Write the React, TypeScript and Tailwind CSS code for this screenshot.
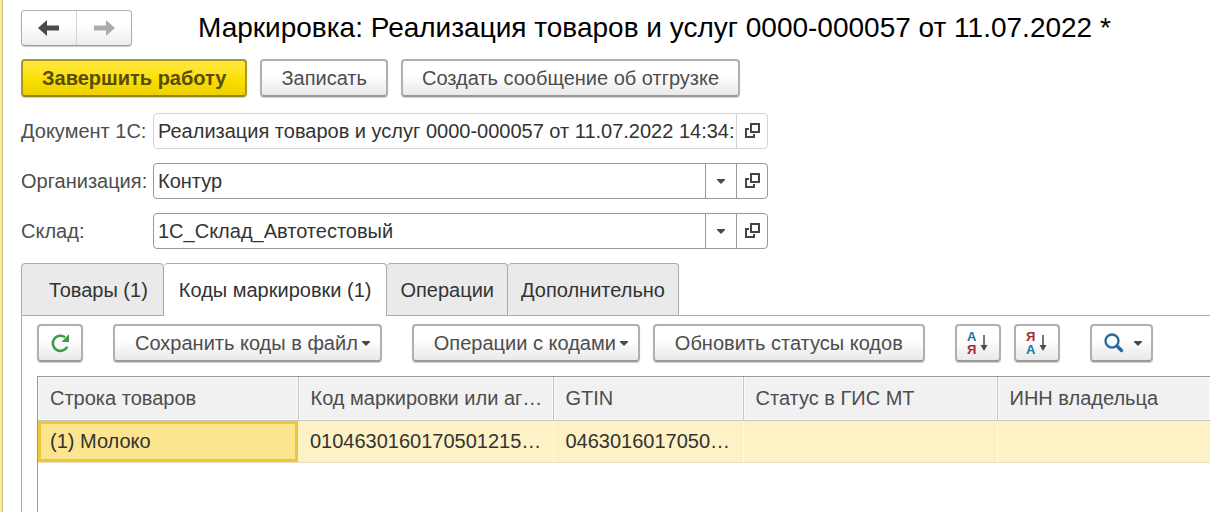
import React, { useState } from 'react';
import clsx from 'clsx';

interface MarkingRow {
  id: number;
  product: string;
  code: string;
  gtin: string;
  status: string;
  inn: string;
}

const tabs = [
  { title: 'Товары (1)', padding: 'border-l pl-[27px] pr-[15px]' },
  { title: 'Коды маркировки (1)', padding: 'px-[15px]' },
  { title: 'Операции', padding: 'px-[13px]' },
  { title: 'Дополнительно', padding: 'px-[13px]' },
];

const columns = [
  { title: 'Строка товаров', width: 'w-[260px]' },
  { title: 'Код маркировки или аг…', width: 'w-[255px]' },
  { title: 'GTIN', width: 'w-[190px]' },
  { title: 'Статус в ГИС МТ', width: 'w-[254px]' },
  { title: 'ИНН владельца', width: '' },
];

const rows: MarkingRow[] = [
  {
    id: 1,
    product: '(1) Молоко',
    code: '0104630160170501215…',
    gtin: '0463016017050…',
    status: '',
    inn: '',
  },
];

const buttonBase =
  'flex h-[38px] shrink-0 items-center justify-center rounded border-2 whitespace-nowrap shadow-[0_1px_1px_rgba(0,0,0,0.2)]';
const grayButton =
  'border-[#b0b0b0] border-b-[#9a9a9a] bg-linear-to-b from-white from-40% to-[#e9e9e9] text-[#4d4d4d]';

function ToolButton({
  className,
  label,
  children,
}: {
  className?: string;
  label?: string;
  children: React.ReactNode;
}) {
  return (
    <button type="button" aria-label={label} className={clsx(buttonBase, grayButton, className)}>
      {children}
    </button>
  );
}

function Caret() {
  return (
    <svg className="h-[5px] w-2 shrink-0 fill-[#4a4a4a]" viewBox="0 0 8 5" aria-hidden="true">
      <path d="M0 0h8v1L4 5 0 1z" />
    </svg>
  );
}

function OpenIcon() {
  return (
    <svg className="h-4 w-4" viewBox="0 0 16 16" fill="none" stroke="#444" strokeWidth="2" aria-hidden="true">
      <path d="M7 1h8v8H7z" />
      <path d="M5 6H2v8h8v-3" />
    </svg>
  );
}

function NavArrow({ flip }: { flip?: boolean }) {
  return (
    <svg
      className={clsx('h-4 w-[22px]', flip ? 'rotate-180 fill-[#ababab]' : 'fill-[#4a4a4a]')}
      viewBox="0 0 22 16"
      aria-hidden="true"
    >
      <path d="M0 8 9 0v5.500h12v5H9V16z" />
    </svg>
  );
}

function SortIcon({ letters }: { letters: string }) {
  return (
    <span className="flex items-center gap-1" aria-hidden="true">
      <span className="flex flex-col text-[13px] leading-[13px] font-bold">
        {letters.split('').map((letter) => (
          <span key={letter} className={letter === 'А' ? 'text-[#27709f]' : 'text-[#a52a2e]'}>
            {letter}
          </span>
        ))}
      </span>
      <svg className="h-4 w-2" viewBox="0 0 8 16">
        <path d="M4 0v11" stroke="#4a4a4a" strokeWidth="1.500" />
        <path d="M0.500 10h7L4 16z" fill="#4a4a4a" />
      </svg>
    </span>
  );
}

function SelectField({ id, label, value }: { id: string; label: string; value: string }) {
  return (
    <div className="flex items-center">
      <label htmlFor={id} className="w-[132px] shrink-0 text-[#4d4d4d]">
        {label}
      </label>
      <div className="flex h-9 w-full max-w-[615px] rounded border border-[#999] bg-white">
        <div className="relative flex min-w-0 flex-1">
          <select id={id} defaultValue={value} className="w-full appearance-none bg-transparent pr-9 pl-1 text-[#333]">
            <option>{value}</option>
          </select>
          <span className="pointer-events-none absolute inset-y-0 right-0 flex w-[31px] items-center justify-center border-l border-[#999]">
            <Caret />
          </span>
        </div>
        <button
          type="button"
          aria-label={`Открыть: ${label}`}
          className="flex w-[31px] shrink-0 items-center justify-center border-l border-[#999]"
        >
          <OpenIcon />
        </button>
      </div>
    </div>
  );
}

export default function App() {
  const [activeTab, setActiveTab] = useState(1);

  return (
    <div className="flex min-h-screen flex-col overflow-hidden border-l-2 border-[#fbeb9e] bg-white font-['Liberation_Sans',Arial,sans-serif] text-[20px] leading-6">
      <div className="flex flex-1 flex-col border-l border-[#c9bd84] pt-2.5 pl-[18px]">
        <header className="flex items-center">
          <div className="flex h-9 w-[111px] shrink-0 rounded border border-[#b0b0b0] border-b-[#999] bg-linear-to-b from-white from-40% to-[#ececec] shadow-[0_1px_1px_rgba(0,0,0,0.2)]">
            <button type="button" aria-label="Назад" className="flex flex-1 items-center justify-center">
              <NavArrow />
            </button>
            <button
              type="button"
              aria-label="Вперед"
              className="flex flex-1 items-center justify-center border-l border-[#d5d5d5]"
            >
              <NavArrow flip />
            </button>
          </div>
          <h1 className="ml-[66px] text-[28px] leading-9 whitespace-nowrap text-black">
            Маркировка: Реализация товаров и услуг 0000-000057 от 11.07.2022 *
          </h1>
        </header>

        <div className="mt-[13px] flex gap-[13px]">
          <button
            type="button"
            className={clsx(
              buttonBase,
              'border-[#a8962a] border-b-[#97851c] bg-linear-to-b from-[#ffe83c] via-[#fbe000] to-[#ecd000] px-[19px] font-bold text-[#574c10]'
            )}
          >
            Завершить работу
          </button>
          <ToolButton className="px-[19px]">Записать</ToolButton>
          <ToolButton className="px-[19px]">Создать сообщение об отгрузке</ToolButton>
        </div>

        <form className="mt-4 flex flex-col gap-3.5">
          <div className="flex items-center">
            <label htmlFor="document" className="w-[132px] shrink-0 text-[#4d4d4d]">
              Документ 1С:
            </label>
            <div className="flex h-9 w-full max-w-[615px] rounded border border-[#d3d3d3]">
              <input
                id="document"
                type="text"
                readOnly
                value="Реализация товаров и услуг 0000-000057 от 11.07.2022 14:34:"
                className="min-w-0 flex-1 pl-1 text-[#333]"
              />
              <button
                type="button"
                aria-label="Открыть документ"
                className="flex w-[31px] shrink-0 items-center justify-center border-l border-[#d3d3d3]"
              >
                <OpenIcon />
              </button>
            </div>
          </div>
          <SelectField id="organization" label="Организация:" value="Контур" />
          <SelectField id="warehouse" label="Склад:" value="1С_Склад_Автотестовый" />
        </form>

        <div className="mt-3.5 flex" role="tablist">
          {tabs.map((tab, index) => (
            <button
              key={tab.title}
              type="button"
              role="tab"
              aria-selected={activeTab === index}
              onClick={() => setActiveTab(index)}
              className={clsx(
                'h-[53px] rounded-t border-t border-r border-[#aaa] whitespace-nowrap text-[#333]',
                tab.padding,
                activeTab === index ? 'bg-white' : 'border-b bg-[#eaeaea]'
              )}
            >
              {tab.title}
            </button>
          ))}
          <div className="flex-1 border-b border-[#aaa]" />
        </div>

        <div className="flex flex-1 flex-col border-l border-[#aaa] pt-2 pl-[15px]" role="tabpanel">
          <div className="flex">
            <ToolButton label="Обновить" className="w-[46px]">
              <svg className="h-5 w-5" viewBox="0 0 20 20" fill="none" aria-hidden="true">
                <path d="M17.200 13.800A7.600 7.600 0 1 1 15 4.200" stroke="#3a9e45" strokeWidth="2.600" />
                <path d="M19 1v8h-7.500z" fill="#3a9e45" />
              </svg>
            </ToolButton>
            <ToolButton className="ml-[30px] gap-1 pr-2.5 pl-5">
              Сохранить коды в файл
              <Caret />
            </ToolButton>
            <ToolButton className="ml-[30px] gap-1 pr-2.5 pl-5">
              Операции с кодами
              <Caret />
            </ToolButton>
            <ToolButton className="ml-[13px] px-5">Обновить статусы кодов</ToolButton>
            <ToolButton label="Сортировать по возрастанию" className="ml-[30px] w-[46px]">
              <SortIcon letters="АЯ" />
            </ToolButton>
            <ToolButton label="Сортировать по убыванию" className="ml-[13px] w-[46px]">
              <SortIcon letters="ЯА" />
            </ToolButton>
            <ToolButton label="Найти" className="ml-[30px] w-[63px] gap-2.5 pl-1">
              <svg className="h-5 w-5" viewBox="0 0 20 20" fill="none" stroke="#2a6d9e" aria-hidden="true">
                <circle cx="8" cy="8" r="6.500" strokeWidth="2.400" />
                <path d="m13 13 4.500 4.500" strokeWidth="3.500" strokeLinecap="round" />
              </svg>
              <Caret />
            </ToolButton>
          </div>

          <div className="mt-3.5 flex-1 border-t border-l border-[#999]">
            <table className="w-full table-fixed border-collapse text-left whitespace-nowrap">
              <thead>
                <tr className="h-[43px] border-b border-[#c4c4c4]">
                  {columns.map((column) => (
                    <th
                      key={column.title}
                      className={clsx(
                        'border-r border-[#c4c4c4] bg-[#f1f1f1] pl-3 font-normal text-[#4d4d4d] inset-ring inset-ring-[#fafafa] last:border-r-0',
                        column.width
                      )}
                    >
                      {column.title}
                    </th>
                  ))}
                </tr>
              </thead>
              <tbody>
                {rows.map((row) => (
                  <tr key={row.id} className="h-[42px] border-b border-[#e8dfc0] bg-[#fdf1c6] text-[#333]">
                    <td className="bg-[#fde48f] pl-3 inset-ring-3 inset-ring-[#edc738]">{row.product}</td>
                    <td className="border-r border-[#fff9e3] pl-3">{row.code}</td>
                    <td className="border-r border-[#fff9e3] pl-3">{row.gtin}</td>
                    <td className="border-r border-[#fff9e3] pl-3">{row.status}</td>
                    <td className="pl-3">{row.inn}</td>
                  </tr>
                ))}
              </tbody>
            </table>
          </div>
        </div>
      </div>
    </div>
  );
}
